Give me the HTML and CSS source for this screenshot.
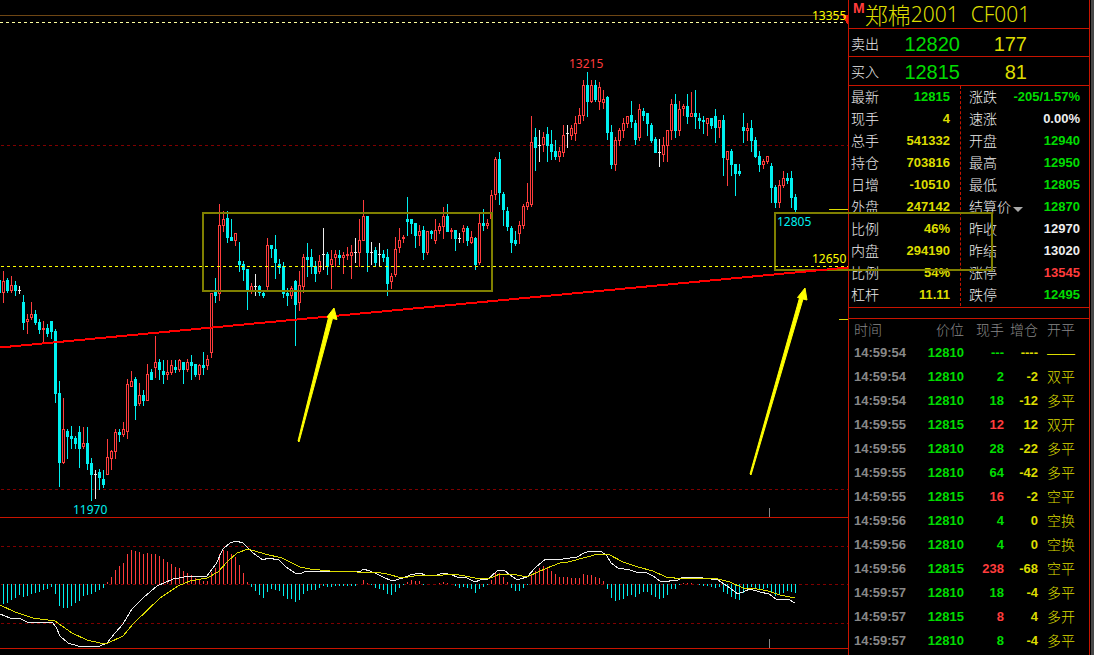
FILE: index.html
```
<!DOCTYPE html>
<html lang="zh-CN">
<head>
<meta charset="utf-8">
<title>郑棉2001 CF001</title>
<link rel="stylesheet" href="styles.css">
</head>
<body>
<main class="terminal">
  <section class="chart" aria-label="K线图">
    <svg class="plot" viewBox="0 0 848 655">
      <g class="grid">
        <path class="frame-top" d="M0 15.5H848"/>
        <path class="dash-pale" d="M0 22.5H848"/>
        <path class="dash-dark" d="M1 145.5H848M1 489.5H848M1 546.5H848M1 584.5H848M1 623.5H848"/>
        <path class="frame" d="M0 517.5H848M0 648.5H848"/>
        <path class="time-mark" d="M769.5 508V517M769.5 639V648"/>
        <path class="price-mark" d="M829 209.5H848M839 319.5H848"/>
      </g>
      <g id="histogram"></g>
      <polyline class="dif" points="0,614 10,618 19,618 27,622 40,623 52,622 56,627 60,636 68,643 78,646 100,646 107,643 115,633 123,624 132,609 143,598 157,586 173,579 190,576 207,576 216,564 223,549 230,543 236,541 243,543 253,553 263,560 268,558 279,560 286,567 295,573 299,574 307,571 317,572 323,571 328,572 333,571 360,572 363,569 370,571 377,574 383,577 392,581 403,578 410,575 420,573 425,575 437,575 443,573 452,575 457,577 467,578 475,582 480,580 488,579 497,571 504,570 510,575 516,579 520,579 527,577 535,568 542,562 546,559 563,559 577,557 584,553 590,551 602,552 607,556 611,563 618,568 630,570 636,572 647,573 653,576 660,581 667,582 672,580 678,580 683,577 703,578 718,580 727,586 738,594 750,589 760,592 769,594 776,599 788,599 795,603"/>
      <polyline class="dea" points="0,605 15,612 33,618 55,621 72,633 87,640 100,643 108,643 123,636 133,624 160,598 178,586 190,581 207,578 218,572 228,561 237,553 248,549 265,554 282,558 300,567 310,569 330,571 357,572 375,572 387,574 402,578 420,575 443,575 452,574 465,576 475,578 488,579 500,574 512,574 527,577 538,572 547,568 560,563 568,562 587,557 598,554 608,554 623,562 638,567 653,571 666,577 683,579 700,578 718,579 730,582 743,588 757,589 768,591 780,595 795,598"/>
      <g id="candles"></g>
      <path class="zone" d="M203 213H492V291H203ZM775 213H992V270H775Z"/>
      <path class="dash-yellow" d="M1 266.5H848"/>
      <path class="trend" d="M0 347.500L848 267.500"/>
      <path class="arrow" d="M298 441L328.500 317.500L327 317L334 308L337 319.500L332.500 318.500L299 442Z"/>
      <path class="arrow" d="M750 474L799.500 298L797.500 297.500L805 288L807 300L803 299L751 475Z"/>
      <path class="marker" d="M848 15V25L842 15Z"/>
      <text class="label up" x="569" y="68">13215</text>
      <text class="label down" x="73" y="514">11970</text>
      <text class="label down" x="777" y="226">12805</text>
      <text class="label level" x="812" y="20">13355</text>
      <text class="label level" x="812" y="263">12650</text>
    </svg>
  </section>

  <aside class="panel">
    <h1 class="title"><sup class="flag">M</sup><span class="name">郑棉</span><span class="code">2001</span><span class="code second">CF001</span></h1>
    <dl class="bidask">
      <div class="side"><dt>卖出</dt><dd class="down">12820</dd><dd class="amount">177</dd></div>
      <div class="side"><dt>买入</dt><dd class="down">12815</dd><dd class="amount">81</dd></div>
    </dl>
    <div class="quotes">
      <dl class="facts">
        <div><dt>最新</dt><dd class="down">12815</dd></div>
        <div><dt>现手</dt><dd class="vol">4</dd></div>
        <div><dt>总手</dt><dd class="vol">541332</dd></div>
        <div><dt>持仓</dt><dd class="vol">703816</dd></div>
        <div><dt>日增</dt><dd class="vol">-10510</dd></div>
        <div><dt>外盘</dt><dd class="vol">247142</dd></div>
        <div><dt>比例</dt><dd class="vol">46%</dd></div>
        <div><dt>内盘</dt><dd class="vol">294190</dd></div>
        <div><dt>比例</dt><dd class="vol">54%</dd></div>
        <div><dt>杠杆</dt><dd class="vol">11.11</dd></div>
      </dl>
      <dl class="facts second">
        <div><dt>涨跌</dt><dd class="down">-205/1.57%</dd></div>
        <div><dt>速涨</dt><dd>0.00%</dd></div>
        <div><dt>开盘</dt><dd class="down">12940</dd></div>
        <div><dt>最高</dt><dd class="down">12950</dd></div>
        <div><dt>最低</dt><dd class="down">12805</dd></div>
        <div><dt><button class="picker" type="button">结算价<svg class="caret" viewBox="0 0 10 5"><path d="M0 0H10L5 5Z"/></svg></button></dt><dd class="down">12870</dd></div>
        <div><dt>昨收</dt><dd>12970</dd></div>
        <div><dt>昨结</dt><dd>13020</dd></div>
        <div><dt>涨停</dt><dd class="up">13545</dd></div>
        <div><dt>跌停</dt><dd class="down">12495</dd></div>
      </dl>
    </div>
    <table class="ticks">
      <thead><tr><th class="time">时间</th><th>价位</th><th>现手</th><th>增仓</th><th class="kind">开平</th></tr></thead>
      <tbody>
        <tr><td class="time">14:59:54</td><td class="down">12810</td><td class="down">---</td><td>----</td><td class="kind">——</td></tr>
        <tr><td class="time">14:59:54</td><td class="down">12810</td><td class="down">2</td><td>-2</td><td class="kind">双平</td></tr>
        <tr><td class="time">14:59:54</td><td class="down">12810</td><td class="down">18</td><td>-12</td><td class="kind">多平</td></tr>
        <tr><td class="time">14:59:55</td><td class="down">12815</td><td class="up">12</td><td>12</td><td class="kind">双开</td></tr>
        <tr><td class="time">14:59:55</td><td class="down">12810</td><td class="down">28</td><td>-22</td><td class="kind">多平</td></tr>
        <tr><td class="time">14:59:55</td><td class="down">12810</td><td class="down">64</td><td>-42</td><td class="kind">多平</td></tr>
        <tr><td class="time">14:59:55</td><td class="down">12815</td><td class="up">16</td><td>-2</td><td class="kind">空平</td></tr>
        <tr><td class="time">14:59:56</td><td class="down">12810</td><td class="down">4</td><td>0</td><td class="kind">空换</td></tr>
        <tr><td class="time">14:59:56</td><td class="down">12810</td><td class="down">4</td><td>0</td><td class="kind">空换</td></tr>
        <tr><td class="time">14:59:56</td><td class="down">12815</td><td class="up">238</td><td>-68</td><td class="kind">空平</td></tr>
        <tr><td class="time">14:59:57</td><td class="down">12810</td><td class="down">18</td><td>-4</td><td class="kind">多平</td></tr>
        <tr><td class="time">14:59:57</td><td class="down">12815</td><td class="up">8</td><td>4</td><td class="kind">多开</td></tr>
        <tr><td class="time">14:59:57</td><td class="down">12810</td><td class="down">8</td><td>-4</td><td class="kind">多平</td></tr>
      </tbody>
    </table>
  </aside>
  <div class="edge"></div>
</main>
<script src="chart.js"></script>
</body>
</html>
```

FILE: styles.css
```
* { box-sizing: border-box; }

body {
  margin: 0;
  background: #000;
  color: #eee;
  font-family: "Liberation Sans", "Noto Sans CJK SC", sans-serif;
  font-size: 14px;
}

.terminal { display: flex; min-height: 100vh; overflow: hidden; }
.chart { flex: 1; min-width: 0; }

/* The marked zone runs on over the quote panel. */
.plot {
  display: block;
  position: relative;
  z-index: 1;
  width: 100%;
  height: auto;
  overflow: visible;
  pointer-events: none;
}
.plot path, .plot polyline { fill: none; shape-rendering: crispEdges; }
.frame { stroke: #c81400; }
.frame-top { stroke: #6e4614; }
.dash-pale { stroke: #ffffa0; stroke-dasharray: 3 3; }
.dash-dark { stroke: #800000; stroke-dasharray: 3 3; }
.dash-yellow { stroke: #ff0; stroke-dasharray: 3 3; }
.time-mark { stroke: #888; }
.price-mark { stroke: #dcdc00; }
.plot .marker { fill: #f02010; }
.zone { stroke: #808000; stroke-width: 2; }
.trend { stroke: #f00; stroke-width: 2; }
.plot .arrow { fill: #ff0; stroke: #ff0; stroke-width: 1; shape-rendering: auto; }
.dif { stroke: #eee; }
.dea { stroke: #dcdc00; }
.plot .bear { stroke: #00f0f0; }
.plot .bear-body { fill: #00f0f0; }
.plot .bull { stroke: #ff3c3c; }
.plot .flat { stroke: #eee; }

.label { font-family: "Noto Sans", sans-serif; font-size: 12px; }
.label.up { fill: #ff3c3c; }
.label.down { fill: #00f0f0; }
.label.level { fill: #ff0; }

.up { color: #ff3c3c; }
.down { color: #00dc00; }

.panel {
  flex: 0 0 242px;
  border: solid #c81400;
  border-width: 0 1px;
}
.edge { flex: 0 0 4px; border-left: 1px solid #000; background: #484848; }

dl, dd, h1 { margin: 0; }

.title {
  display: flex;
  align-items: center;
  height: 29px;
  padding-left: 4px;
  border-bottom: 1px solid #c81400;
  color: #dcdc00;
  font-weight: 300;
  white-space: nowrap;
}
.flag { align-self: flex-start; color: #ff3c3c; font-size: 14px; font-weight: 700; line-height: 17px; }
.name { font-family: "Noto Sans CJK SC", sans-serif; font-size: 23px; line-height: 28px; }
.code { font-family: "Noto Sans", sans-serif; font-size: 21px; line-height: 28px; }
.code.second { margin-left: 12px; }

.side {
  display: grid;
  grid-template-columns: 53px 56px 67px;
  align-items: center;
  height: 28px;
  padding-left: 2px;
  border-bottom: 1px solid #c81400;
}
.side + .side { height: 29px; }
.side dd { padding-top: 2px; font-size: 20px; line-height: 26px; text-align: right; }
.side .amount { color: #dcdc00; }
.side dt, .facts dt { font-weight: 300; }

.quotes {
  display: grid;
  grid-template-columns: 111px 1fr;
  padding-bottom: 1px;
  border-bottom: 1px solid #c81400;
}
.facts div {
  display: flex;
  justify-content: space-between;
  align-items: center;
  height: 22px;
  padding: 0 10px 0 2px;
}
.facts.second div { padding: 0 9px 0 8px; }
.facts.second { border-left: 1px dashed #c81400; }
.facts dd { font-size: 13px; font-weight: 700; line-height: 20px; }
.facts dt { line-height: 22px; }
.vol { color: #dcdc00; }

.picker {
  display: flex;
  align-items: center;
  gap: 2px;
  padding: 0;
  border: 0;
  background: none;
  color: inherit;
  font: inherit;
}
.caret { width: 10px; height: 5px; margin-top: 4px; fill: #aaa; }

.ticks {
  width: 100%;
  margin-top: 10px;
  border-top: 1px solid #c81400;
  border-spacing: 0;
  table-layout: fixed;
}
.ticks th, .ticks td { height: 24px; padding: 0; text-align: right; line-height: 22px; }
.ticks th { height: 22px; color: #888; font-weight: 300; }
.ticks td { color: #dcdc00; font-size: 13px; font-weight: 700; }
.ticks td.down { color: #00dc00; }
.ticks td.up { color: #ff3c3c; }
.ticks th:nth-child(1) { width: 60px; }
.ticks th:nth-child(2) { width: 55px; }
.ticks th:nth-child(3) { width: 40px; }
.ticks th:nth-child(4) { width: 34px; }
.ticks .time { padding-left: 5px; color: #888; text-align: left; }
.ticks .kind { padding-left: 9px; font-size: 14px; font-weight: 300; text-align: left; }
```

FILE: chart.js
```
// One bar per step of 4: kind (r rise, c fall, w flat), high, body top, body bottom, low.
const bars = `c280,280,293,293 r271,281,293,303 c278,280,291,293 r276,285,291,293 c281,285,291,296 w286,290,290,294
c295,302,323,330 r314,319,322,334 r302,314,318,320 c310,314,323,325 c319,322,330,334 r321,328,330,342
c324,328,334,337 c321,321,332,339 c329,331,394,403 c381,393,463,487 r398,429,463,464 c429,431,437,459
c426,436,439,449 c436,438,444,449 c426,432,449,468 r427,443,447,449 c427,443,464,470 c458,463,475,501
w470,474,474,499 c469,472,478,490 c470,479,485,488 r439,457,475,475 r450,451,459,470 r429,432,452,459
c429,432,435,442 r422,429,435,437 r379,384,432,439 r371,381,387,387 c377,379,406,420 r383,395,404,406
c390,395,401,406 r364,374,401,401 c369,372,380,380 r336,362,368,378 c359,362,370,380 c360,371,375,384
r360,372,375,380 r360,365,373,375 c360,367,370,373 r359,360,370,372 c362,362,370,384 r359,362,370,372
c355,362,366,380 c364,364,375,377 r364,365,375,380 c352,365,368,375 r355,359,366,370 r293,293,353,358
c278,292,296,303 r204,225,294,301 r211,219,226,232 c211,218,238,243 c219,237,241,241 r233,233,241,246
c242,261,265,272 c261,264,270,281 c269,269,291,310 r283,286,291,294 w274,286,286,296 c285,286,293,296
c290,293,296,298 r238,245,287,291 c245,245,249,258 c235,249,263,279 c259,264,268,274 c262,266,294,298
c288,293,296,306 r286,288,296,299 c280,281,305,346 r271,285,303,311 r254,257,287,293 c243,257,260,277
c249,257,267,274 c261,266,274,282 r255,261,272,274 w228,254,254,270 c252,254,267,275 r250,259,265,289
r250,254,258,267 c250,255,258,265 r252,255,258,274 r247,254,256,260 r245,252,256,279 w238,252,252,263
r219,240,253,267 r200,216,241,241 c216,216,253,272 w242,252,252,265 c247,250,263,267 w243,254,254,267
c250,254,258,262 c249,257,284,296 r273,276,282,289 r237,249,275,277 r228,240,248,253 r235,237,239,243
c197,219,222,236 c219,219,224,234 c223,223,236,248 r225,231,236,246 c226,230,253,260 r231,231,253,255
c230,231,234,239 r219,230,241,244 r223,226,231,234 r207,216,227,239 c204,216,232,232 r228,230,232,239
c230,230,239,251 w233,238,238,243 r225,228,232,243 c226,228,241,246 r231,237,243,244 c237,238,265,270
r214,223,263,265 c209,223,226,231 r219,223,226,229 r190,195,219,236 r157,159,195,200 c152,159,193,205
c192,194,210,226 c207,211,227,231 c226,228,243,253 c231,240,244,246 r221,225,234,244 r204,206,226,229
r183,202,207,210 r116,142,205,207 c128,137,148,171 w130,145,145,162 r132,137,145,152 c127,134,146,162
c130,144,152,160 c140,151,157,160 r147,151,157,162 r125,135,153,157 w125,133,133,148 r125,128,136,140
r116,123,134,141 r108,115,124,124 r80,85,116,121 c72,85,102,117 r80,85,102,103 c80,85,100,102
r82,87,102,110 r90,99,103,109 c96,97,133,140 c125,132,165,169 r137,140,165,171 r128,130,141,146
r118,123,131,138 r116,116,124,128 c101,115,122,128 c120,123,140,145 r104,109,138,141 c108,111,116,121
c113,113,124,136 c123,125,141,143 c137,139,153,153 w139,152,152,167 r137,145,155,162 r130,130,146,162
r99,104,131,140 c94,104,131,138 r101,109,131,136 r104,106,109,116 c94,106,117,124 r92,113,117,117
c90,113,117,129 c113,118,121,129 c116,120,122,134 r118,118,124,136 c118,118,126,129 c109,116,128,143
r120,120,128,138 c115,120,158,176 r151,151,160,186 c149,151,165,176 c164,164,174,196 c164,171,174,176
c113,127,131,143 r123,128,131,141 c120,128,141,152 c137,140,157,158 c151,156,165,172 r159,161,165,169
r156,156,162,164 c163,166,188,203 c185,187,203,208 r180,185,203,208 r171,178,186,188 c173,178,181,184
c171,178,198,208 c194,197,210,213`.split(/\s+/);

const momentum = [
  -20,-19,-16,-14,-11,-13,-12,-10,-9,-8,-6,-5,-3,-10,-22,-24,-24,-22,-19,-17,-12,-11,-10,-8,-6,-4,
  2,7,14,18,21,30,34,33,32,30,31,30,30,28,25,22,20,17,16,13,11,9,6,5,3,3,12,16,30,34,33,30,27,19,11,2,
  -3,-7,-11,-14,-8,-5,-6,-7,-12,-15,-15,-18,-16,-10,-7,-6,-6,-4,-2,-3,-3,-2,-2,-2,-2,-2,-2,0,4,1,-1,
  -4,-5,-6,-10,-11,-8,-4,-1,2,4,3,3,-1,0,0,0,1,2,1,0,-2,-4,-3,-4,-5,-9,-5,-3,-1,4,11,11,7,2,-4,-7,-7,
  -4,-1,9,13,16,18,16,13,10,7,7,7,6,6,6,10,9,9,7,6,3,-5,-14,-17,-16,-15,-12,-11,-13,-10,-8,-8,-11,
  -13,-15,-14,-11,-5,-5,-1,1,1,1,0,-1,-2,-2,-3,-4,-3,-8,-10,-13,-15,-16,-9,-5,-3,-4,-5,-5,-4,-8,
  -12,-11,-9,-7,-8,-9
];

const add = (id, kind, d) => {
  const path = document.createElementNS("http://www.w3.org/2000/svg", "path");
  path.setAttribute("class", kind);
  path.setAttribute("d", d);
  document.getElementById(id).append(path);
};

const shapes = { bull: "", bear: "", flat: "", "bear-body": "" };
bars.forEach((bar, i) => {
  const [high, top, bottom, low] = bar.slice(1).split(",").map(Number);
  const x = i * 4 - 1;
  const mid = x + 0.5;
  if (bar[0] === "r") {
    shapes.bull += `M${mid} ${high}V${top}M${mid} ${bottom}V${low}M${x - 0.5} ${top + 0.5}H${x + 1.5}V${bottom - 0.5}H${x - 0.5}Z`;
  } else if (bar[0] === "c") {
    shapes.bear += `M${mid} ${high}V${low}`;
    shapes["bear-body"] += `M${x - 1} ${top}H${x + 2}V${bottom}H${x - 1}Z`;
  } else {
    shapes.flat += `M${mid} ${high}V${low}M${x - 1} ${top + 0.5}H${x + 2}`;
  }
});
Object.entries(shapes).forEach(([kind, d]) => add("candles", kind, d));

const columns = { bull: "", bear: "" };
momentum.forEach((value, i) => {
  if (value) columns[value > 0 ? "bull" : "bear"] += `M${i * 4 + 3.5} 584V${584 - value}`;
});
Object.entries(columns).forEach(([kind, d]) => add("histogram", kind, d));
```
